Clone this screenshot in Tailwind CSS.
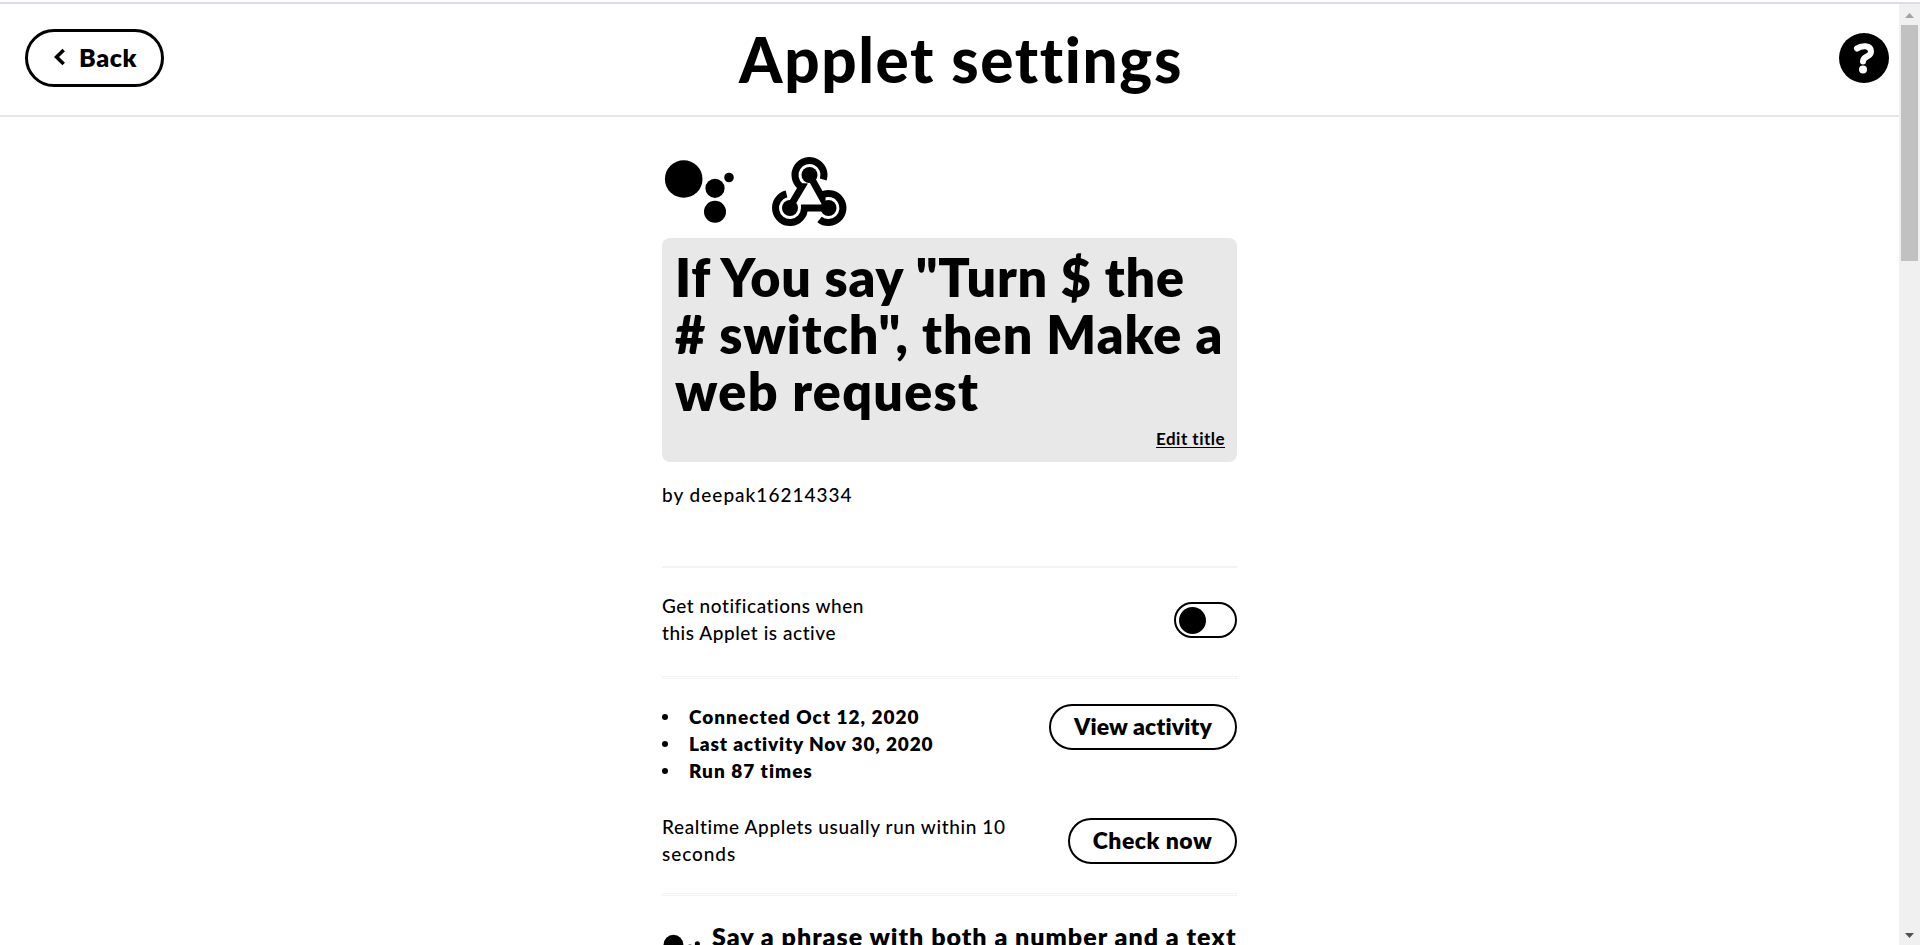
<!DOCTYPE html>
<html lang="en"><head><meta charset="utf-8"><title>Applet settings</title>
<script src="https://cdn.jsdelivr.net/npm/@tailwindcss/browser@4"></script></head>
<body class="h-[945px] overflow-hidden bg-white font-['Lato','Noto_Sans',sans-serif] text-black [font-variant-ligatures:none]">
<div class="flex h-[945px] flex-col border-t-2 border-white">
<div class="h-0.5 shrink-0 bg-[#dcdce4]"></div>
<div class="flex min-h-0 flex-1">
<div class="min-w-0 flex-1 overflow-hidden">
<header class="relative flex h-[113px] items-start justify-between border-b-2 border-[#e6e6e6] pl-[25px] pr-[10px] pt-[25px]">
<button class="flex h-[58px] w-[139px] items-center rounded-full border-3 border-black pb-0.5 pl-[26px] text-[25px] leading-none font-extrabold">
<svg class="mr-[13px] h-[18px] w-[12px]" viewBox="0 0 12 18" fill="none" stroke="#000" stroke-width="3.6"><path d="M9.700 2 2.500 9l7.200 7"/></svg><span class="tracking-[0.6px]">Back</span></button>
<h1 class="absolute inset-x-0 top-[19px] ml-[23px] text-center text-[62px] leading-[72px] font-black tracking-[1.6px]">Applet settings</h1>
<svg class="mt-1 h-[50px] w-[50px]" viewBox="0 0 50 50"><circle cx="25" cy="25" r="25"/><path d="M18 15.500C22 12.500 32 11.500 32 18.500C32 24.500 24 22.500 24 28.500" fill="none" stroke="#fff" stroke-width="6" stroke-linecap="round"/><circle cx="24" cy="36.500" r="4" fill="#fff"/></svg>
</header>
<main class="ml-[662px] w-[575px] pt-[38px]">
<div class="flex h-[83px] items-start">
<svg class="h-[72px] w-[72px]" viewBox="0 0 72 72"><circle cx="21.700" cy="24" r="18.800"/><circle cx="53" cy="33.300" r="9.600"/><circle cx="53" cy="56.800" r="11"/><circle cx="67" cy="22.500" r="4.800"/></svg>
<svg class="ml-[37px] h-[73px] w-[78px]" viewBox="0 0 78 73"><g fill="none" stroke="#000" stroke-width="7"><path d="M52.300 24.500A14.500 14.500 0 1 0 29.500 31.400L31 31.500 20 50"/><path d="M15.500 38.900A14.500 14.500 0 1 0 33.500 53H57"/><path d="M38.500 20 51 42.500V40A14.500 14.500 0 1 1 48.500 64.400"/></g><circle cx="38.500" cy="20" r="8"/><circle cx="19" cy="53" r="8"/><circle cx="57.500" cy="53" r="8"/></svg>
</div>
<section class="h-[224px] rounded-lg bg-[#e8e8e8] pl-[13px] pr-3 pt-[11px]">
<h2 class="text-[52px] leading-[57px] font-extrabold whitespace-nowrap"><span class="block tracking-[0.82px]">If You say "Turn $ the</span><span class="block tracking-[1px]">#&nbsp;switch", then Make a</span><span class="block tracking-[1.3px]">web request</span></h2>
<div class="flex justify-end pt-[7px] text-[17px] leading-6 font-bold"><a class="tracking-[0.48px] underline underline-offset-2">Edit title</a></div>
</section>
<p class="pt-[19px] text-[19px] leading-[27px] font-medium tracking-[1px]">by deepak16214334</p>
<hr class="mt-[58px] border-t-2 border-[#f3f3f3]">
<section class="flex h-[108px] justify-between pt-[24px] text-[19px] leading-[27px] font-medium">
<p class="tracking-[0.55px]">Get notifications when<br>this Applet is active</p>
<span class="mt-[10px] block h-9 w-[63px] rounded-full border-2 border-black p-[3px]"><span class="block h-[27px] w-[27px] rounded-full bg-black"></span></span>
</section>
<hr class="h-[3px] border border-[#f3f3f3]">
<section class="flex h-[139px] justify-between pt-[25px] text-[19px] leading-[27px] font-extrabold">
<ul class="-mt-px"><li class="flex items-center"><i class="mr-[21px] h-1.5 w-1.5 rounded-full bg-black"></i><span class="tracking-[1px]">Connected Oct 12, 2020</span></li><li class="flex items-center"><i class="mr-[21px] h-1.5 w-1.5 rounded-full bg-black"></i><span class="tracking-[0.84px]">Last activity Nov 30, 2020</span></li><li class="flex items-center"><i class="mr-[21px] h-1.5 w-1.5 rounded-full bg-black"></i><span class="tracking-[1px]">Run 87 times</span></li></ul>
<button class="h-[46px] w-[188px] rounded-full border-2 border-black pb-px text-[23px] leading-none font-extrabold tracking-[0.15px]">View activity</button>
</section>
<section class="flex h-[75px] justify-between text-[19px] leading-[27px] font-medium">
<p class="-mt-[5px] tracking-[0.63px]">Realtime Applets usually run within 10<br><span class="tracking-[0.92px]">seconds</span></p>
<button class="h-[46px] w-[169px] rounded-full border-2 border-black pb-px text-[23px] leading-none font-extrabold tracking-[0.5px]">Check now</button>
</section>
<hr class="h-[3px] border border-[#f3f3f3]">
<section class="flex pt-[24px]">
<svg class="mt-[12px] h-[38px] w-[38px]" viewBox="0 0 72 72"><circle cx="21.700" cy="24" r="18.800"/><circle cx="53" cy="33.300" r="9.600"/><circle cx="53" cy="56.800" r="11"/><circle cx="67" cy="22.500" r="4.800"/></svg>
<h3 class="ml-3 text-[25px] leading-[32px] font-extrabold tracking-[1px] whitespace-nowrap">Say a phrase with both a number and a text</h3>
</section>
</main>
</div>
<aside class="flex w-[21px] flex-col items-center bg-[#f0f0f0]">
<svg class="h-[21px] w-[17px]" viewBox="0 0 17 21"><path d="M4 14 8.500 9 13 14z" fill="#a3a3a3"/></svg>
<div class="h-[236px] w-[17px] bg-[#c1c1c1]"></div>
<svg class="mt-auto h-[17px] w-[17px]" viewBox="0 0 17 17"><path d="M4 5h9L8.500 10z" fill="#505050"/></svg>
</aside>
</div></div>
</body></html>
